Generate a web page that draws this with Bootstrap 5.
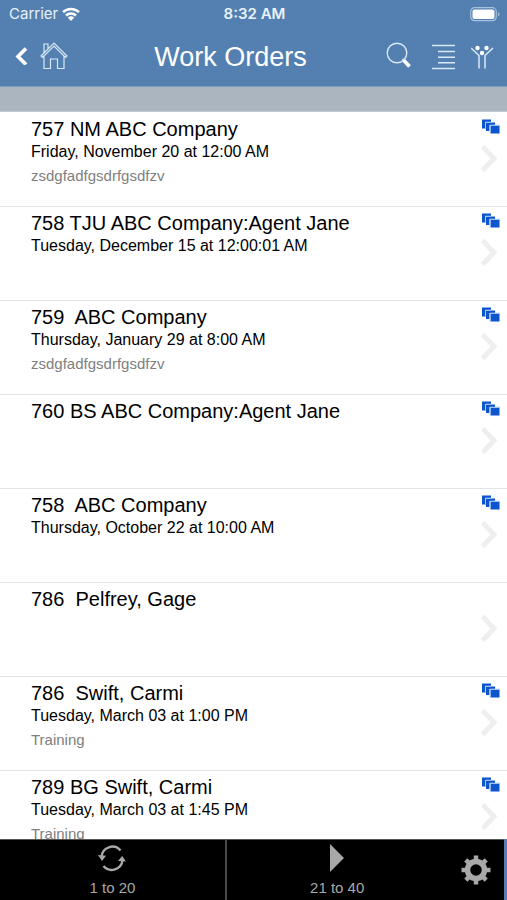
<!DOCTYPE html>
<html lang="en">
<head>
<meta charset="utf-8">
<meta name="viewport" content="width=device-width, initial-scale=1">
<title>Work Orders</title>
<link rel="stylesheet" href="https://cdn.jsdelivr.net/npm/bootstrap@5.3.0/dist/css/bootstrap.min.css">
<style>
  body { font-family: "Liberation Sans", Arial, sans-serif; color: #000; background: #5380b0; }
  .app-top { background: #5380b0; color: #fff; }
  .status-bar { display: grid; grid-template-columns: 1fr auto 1fr; height: 28px; padding: 0 7px 0 9px; font-family: Inter, sans-serif; font-size: 15px; line-height: 28px; color: #e9f2fb; }
  .title-bar { height: 58px; padding: 0 12px 0 14px; }
  .title-bar h1 { font-size: 27px; line-height: 58px; }
  .title-bar a, .title-bar .btn { line-height: 0; color: #d9e8f8; }
  .list-band { height: 26px; background: #abb5bf; border-top: 1px solid #7f9cba; border-bottom: 1px solid #c3cad0; }
  .orders { min-height: 0; overflow: hidden; }
  .order-row { height: 94px; padding: 5px 6px 0 31px; border-bottom: 1px solid #e4e4e6; color: #000; background: #fff; }
  .order-row:first-child { height: 95px; }
  .order-row + .order-row { padding-top: 4px; }
  .order-name { font-size: 20px; line-height: 24px; white-space: pre-wrap; }
  .order-date { font-size: 16px; line-height: 22px; }
  .order-note { font-size: 15px; line-height: 25px; color: #808080; }
  .order-marks { width: 20px; padding-top: 1px; }
  .order-marks .slot { height: 18px; }
  .pager { height: 61px; margin-right: 3px; background: #000; border-top: 1px solid #555; }
  .pager .btn { color: #a8a8a8; font-size: 15px; line-height: 18px; }
  .pager .page-step { flex: 0 0 44.6%; padding: 3px 0; }
  .pager .page-step + .page-step { box-shadow: inset 2px 0 #4a4a4a; }
  .pager .setup { padding: 0 13px 0 0; }
</style>
<script src="https://cdn.jsdelivr.net/npm/bootstrap@5.3.0/dist/js/bootstrap.bundle.min.js"></script>
</head>
<body class="d-flex flex-column vh-100 overflow-hidden">

<svg class="d-none" aria-hidden="true">
  <symbol id="stack" viewBox="0 0 20 17">
    <path fill="#0d55cf" d="M1 1.500h9V4H4v6.500H1zM5 4.500h9V7H8.500v6H5zM9.500 7.500h9v8h-9z"/>
    <path fill="none" stroke="#a9c8f5" d="M4.500 11V4.200H10M9 15.500V7.200H19"/>
  </symbol>
  <symbol id="chevron" viewBox="0 0 20 30">
    <path fill="none" stroke="#efeff0" stroke-width="5" d="M1.500 2.500l11.500 12-11.500 12"/>
  </symbol>
</svg>

<header class="app-top flex-shrink-0">
  <div class="status-bar">
    <div class="d-flex align-items-center gap-1"><span>Carrier</span>
      <svg width="18" height="14" viewBox="0 0 18 14" fill="none" stroke="#fff" stroke-width="2.500" aria-hidden="true"><path d="M1 5.200a11.500 11.500 0 0 1 16 0M4 8.500a7.200 7.200 0 0 1 10 0"/><path fill="#fff" stroke="none" d="M9 14l-3.300-3.400a5 5 0 0 1 6.600 0z"/></svg>
    </div>
    <div class="fw-semibold">8:32 AM</div>
    <div class="d-flex align-items-center justify-content-end">
      <svg width="30" height="15" viewBox="0 0 30 15" aria-hidden="true"><rect x=".7" y=".7" width="25.600" height="13" rx="4" fill="none" stroke="#a5c1de" stroke-width="1.200"/><rect x="2.500" y="2.500" width="22" height="9.400" rx="2" fill="#fff"/><path fill="#a5c1de" d="M28 5q3 2.200 0 4.400z"/></svg>
    </div>
  </div>
  <nav class="title-bar d-flex align-items-center justify-content-between" aria-label="Main">
    <div class="d-flex align-items-center pb-1">
      <a href="#" aria-label="Back"><svg class="d-block" width="14" height="20" viewBox="0 0 14 20" fill="none" stroke="#fff" stroke-width="3.600"><path d="M12 3.500L4 11.500l8 8"/></svg></a>
      <a href="#" class="ms-2 ps-1" aria-label="Home"><svg class="d-block" width="28" height="29" viewBox="0 0 28 29" fill="none" stroke="currentColor" stroke-width="1.200"><path d="M1 15L14 2l13 13-1.500 1.500L14 5 2.500 16.500zM4 12V3h4v5M4 15v12.500h6.500V18h7v9.500H24V15"/></svg></a>
    </div>
    <h1 class="m-0 ps-2 fw-normal">Work Orders</h1>
    <div class="d-flex align-items-center">
      <button class="btn p-0 border-0 me-3" type="button" aria-label="Search"><svg class="d-block mb-1" width="26" height="28" viewBox="0 0 26 28" fill="none"><circle cx="12" cy="12" r="9.800" stroke="currentColor" stroke-width="1.400"/><path stroke="currentColor" stroke-width="2" d="M17.500 18l3 3"/><path stroke="#fff" stroke-width="3.600" d="M19 19.500l5.500 6"/></svg></button>
      <button class="btn p-0 border-0 me-3 ms-1" type="button" aria-label="List view"><svg class="d-block" width="24" height="26" viewBox="0 0 24 26" fill="none" stroke="currentColor" stroke-width="1.500"><path d="M1 1.500h23M7 7.500h17M7 13.200h17M7 18.800h17M1 24.500h23"/></svg></button>
      <button class="btn p-0 border-0" type="button" aria-label="People"><svg class="d-block" width="24" height="24" viewBox="0 0 24 24" fill="none" stroke="currentColor" stroke-width="1.500"><path d="M0 3l8 7.500V23.500M22 3l-8 7.500V23.500"/><g fill="#fff" stroke="none"><circle cx="6.500" cy="3" r="2.200"/><circle cx="15.500" cy="3" r="2.200"/><circle cx="11" cy="8" r="2.200"/></g></svg></button>
    </div>
  </nav>
</header>

<div class="list-band flex-shrink-0"></div>

<main class="orders flex-fill bg-white">
  <a href="#" class="order-row d-flex text-decoration-none">
    <div class="flex-fill"><div class="order-name">757 NM ABC Company</div><div class="order-date">Friday, November 20 at 12:00 AM</div><div class="order-note">zsdgfadfgsdrfgsdfzv</div></div>
    <div class="order-marks"><div class="slot"><svg class="d-block" width="20" height="17"><use href="#stack"/></svg></div><svg class="d-block mt-2" width="20" height="30"><use href="#chevron"/></svg></div>
  </a>
  <a href="#" class="order-row d-flex text-decoration-none">
    <div class="flex-fill"><div class="order-name">758 TJU ABC Company:Agent Jane</div><div class="order-date">Tuesday, December 15 at 12:00:01 AM</div></div>
    <div class="order-marks"><div class="slot"><svg class="d-block" width="20" height="17"><use href="#stack"/></svg></div><svg class="d-block mt-2" width="20" height="30"><use href="#chevron"/></svg></div>
  </a>
  <a href="#" class="order-row d-flex text-decoration-none">
    <div class="flex-fill"><div class="order-name">759  ABC Company</div><div class="order-date">Thursday, January 29 at 8:00 AM</div><div class="order-note">zsdgfadfgsdrfgsdfzv</div></div>
    <div class="order-marks"><div class="slot"><svg class="d-block" width="20" height="17"><use href="#stack"/></svg></div><svg class="d-block mt-2" width="20" height="30"><use href="#chevron"/></svg></div>
  </a>
  <a href="#" class="order-row d-flex text-decoration-none">
    <div class="flex-fill"><div class="order-name">760 BS ABC Company:Agent Jane</div></div>
    <div class="order-marks"><div class="slot"><svg class="d-block" width="20" height="17"><use href="#stack"/></svg></div><svg class="d-block mt-2" width="20" height="30"><use href="#chevron"/></svg></div>
  </a>
  <a href="#" class="order-row d-flex text-decoration-none">
    <div class="flex-fill"><div class="order-name">758  ABC Company</div><div class="order-date">Thursday, October 22 at 10:00 AM</div></div>
    <div class="order-marks"><div class="slot"><svg class="d-block" width="20" height="17"><use href="#stack"/></svg></div><svg class="d-block mt-2" width="20" height="30"><use href="#chevron"/></svg></div>
  </a>
  <a href="#" class="order-row d-flex text-decoration-none">
    <div class="flex-fill"><div class="order-name">786  Pelfrey, Gage</div></div>
    <div class="order-marks"><div class="slot"></div><svg class="d-block mt-2" width="20" height="30"><use href="#chevron"/></svg></div>
  </a>
  <a href="#" class="order-row d-flex text-decoration-none">
    <div class="flex-fill"><div class="order-name">786  Swift, Carmi</div><div class="order-date">Tuesday, March 03 at 1:00 PM</div><div class="order-note">Training</div></div>
    <div class="order-marks"><div class="slot"><svg class="d-block" width="20" height="17"><use href="#stack"/></svg></div><svg class="d-block mt-2" width="20" height="30"><use href="#chevron"/></svg></div>
  </a>
  <a href="#" class="order-row d-flex text-decoration-none">
    <div class="flex-fill"><div class="order-name">789 BG Swift, Carmi</div><div class="order-date">Tuesday, March 03 at 1:45 PM</div><div class="order-note">Training</div></div>
    <div class="order-marks"><div class="slot"><svg class="d-block" width="20" height="17"><use href="#stack"/></svg></div><svg class="d-block mt-2" width="20" height="30"><use href="#chevron"/></svg></div>
  </a>
</main>

<footer class="pager d-flex flex-shrink-0">
  <button class="btn page-step border-0 rounded-0 d-flex flex-column align-items-center justify-content-between" type="button">
    <svg width="28" height="32" viewBox="0 0 28 32" fill="none" stroke="currentColor" stroke-width="2.400" aria-hidden="true"><path d="M3.500 14a10.800 10.800 0 0 1 19-6.500M24.500 17a10.800 10.800 0 0 1-19 6"/><path fill="currentColor" stroke="none" d="M0 12l8 .8-4 5.200zM28 18.500l-8-.5 4.200-5z"/></svg>
    <span>1 to 20</span>
  </button>
  <button class="btn page-step border-0 rounded-0 d-flex flex-column align-items-center justify-content-between" type="button">
    <svg width="16" height="32" viewBox="0 0 16 32" fill="currentColor" aria-hidden="true"><path d="M1 1l14 14L1 29z"/></svg>
    <span>21 to 40</span>
  </button>
  <button class="btn setup border-0 rounded-0 flex-fill d-flex align-items-center justify-content-end" type="button" aria-label="Settings">
    <svg width="30" height="30" viewBox="-15 -15 30 30" fill="none" stroke="currentColor" aria-hidden="true"><circle r="8.500" stroke-width="5.500"/><path stroke-width="4.500" d="M0-14.500v5M0 9.500v5M-14.500 0h5M9.500 0h5M-10.200-10.200l3.500 3.500M6.700 6.700l3.500 3.500M10.200-10.200l-3.500 3.500M-6.700 6.700l-3.500 3.500"/></svg>
  </button>
</footer>
</body>
</html>
